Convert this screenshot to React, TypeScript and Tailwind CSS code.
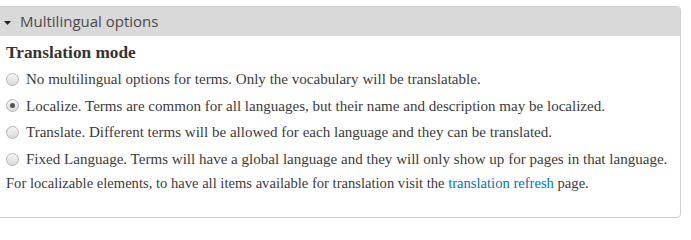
import React, { useState } from 'react';

const options = [
  { id: 'none', label: 'No multilingual options for terms. Only the vocabulary will be translatable.' },
  { id: 'localize', label: 'Localize. Terms are common for all languages, but their name and description may be localized.' },
  { id: 'translate', label: 'Translate. Different terms will be allowed for each language and they can be translated.' },
  { id: 'fixed', label: 'Fixed Language. Terms will have a global language and they will only show up for pages in that language.' },
];

const Radio: React.FC<{ checked: boolean }> = ({ checked }) => (
  <span className="flex h-[13px] w-[13px] shrink-0 items-center justify-center rounded-full border border-[#b4b4b4] bg-gradient-to-b from-[#f4f4f4] to-[#dcdcdc]">
    {checked && <span className="h-[5px] w-[5px] rounded-full bg-[#555]" />}
  </span>
);

const App: React.FC = () => {
  const [mode, setMode] = useState('localize');

  return (
    <div className="h-[224px] w-[691px] bg-white pt-[6px] pr-[10px]">
      <div className="ml-[-4px] h-[212px] overflow-hidden rounded-r-[4px] border border-[#cfcfcf]">
        {/* Fieldset legend */}
        <div className="flex h-[29px] items-center gap-[9px] bg-[#d9d9d9] pl-[7px] font-['Open_Sans',sans-serif] text-[15px] text-[#4a4a4a]">
          <svg width="7" height="4" viewBox="0 0 7 4" className="mt-[2px]">
            <path d="M0 0h7L3.5 4z" fill="#222" />
          </svg>
          <span>Multilingual options</span>
        </div>

        <div className="pl-[9px] pt-[7px] font-['Liberation_Serif',serif] text-[#3b3b3b]">
          <h3 className="text-[17.3px] font-bold leading-[20px] text-[#333]">Translation mode</h3>
          <div className="mt-[6px] flex flex-col gap-[6.7px]">
            {options.map(o => (
              <label
                key={o.id}
                className="flex cursor-pointer items-center gap-[7px] text-[15.05px] leading-[20px]"
                onClick={() => setMode(o.id)}
              >
                <Radio checked={mode === o.id} />
                <span>{o.label}</span>
              </label>
            ))}
          </div>
          <p className="mt-[5px] text-[14.6px] leading-[18px]">
            For localizable elements, to have all items available for translation visit the{' '}
            <a href="#" className="text-[#0074bd]">translation refresh</a> page.
          </p>
        </div>
      </div>
    </div>
  );
};

export default App;
